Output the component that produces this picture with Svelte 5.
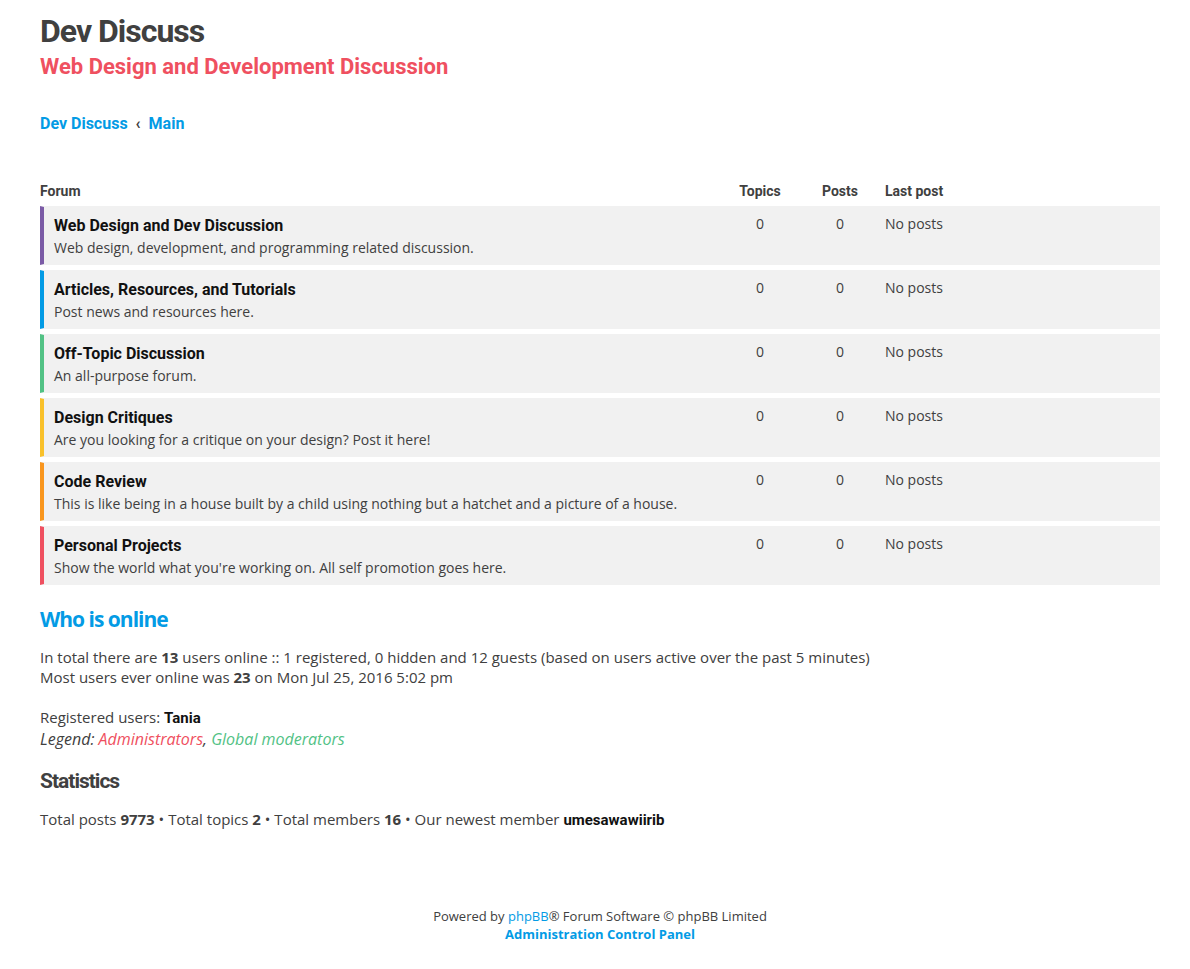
<script>
  const forums = [
    { name: 'Web Design and Dev Discussion', text: 'Web design, development, and programming related discussion.', tone: 'purple' },
    { name: 'Articles, Resources, and Tutorials', text: 'Post news and resources here.', tone: 'blue' },
    { name: 'Off-Topic Discussion', text: 'An all-purpose forum.', tone: 'green' },
    { name: 'Design Critiques', text: 'Are you looking for a critique on your design? Post it here!', tone: 'yellow' },
    { name: 'Code Review', text: 'This is like being in a house built by a child using nothing but a hatchet and a picture of a house.', tone: 'orange' },
    { name: 'Personal Projects', text: "Show the world what you're working on. All self promotion goes here.", tone: 'red' }
  ];
</script>

<div class="page">
  <header>
    <h1>Dev Discuss</h1>
    <p class="tagline">Web Design and Development Discussion</p>
  </header>

  <nav>
    <a href="#home">Dev Discuss</a>
    <span>‹</span>
    <a href="#main">Main</a>
  </nav>

  <main>
    <table>
      <thead>
        <tr>
          <th>Forum</th>
          <th class="num">Topics</th>
          <th class="num">Posts</th>
          <th class="last">Last post</th>
        </tr>
      </thead>
      <tbody>
        {#each forums as forum}
          <tr>
            <td class="forum {forum.tone}">
              <a href="#forum">{forum.name}</a>
              <p>{forum.text}</p>
            </td>
            <td class="num">0</td>
            <td class="num">0</td>
            <td class="last">No posts</td>
          </tr>
        {/each}
      </tbody>
    </table>

    <section>
      <h2><a href="#online">Who is online</a></h2>
      <p>
        In total there are <strong>13</strong> users online :: 1 registered, 0 hidden and 12 guests (based on users active over the past 5 minutes)<br />
        Most users ever online was <strong>23</strong> on Mon Jul 25, 2016 5:02 pm
      </p>
      <p class="users">Registered users: <a class="user" href="#tania">Tania</a></p>
      <p class="legend">Legend: <a class="admin" href="#admins">Administrators</a>, <a class="mod" href="#mods">Global moderators</a></p>
    </section>

    <section>
      <h2 class="stats">Statistics</h2>
      <p>
        Total posts <strong>9773</strong> • Total topics <strong>2</strong> • Total members <strong>16</strong> • Our newest member <a class="user" href="#newest">umesawawiirib</a>
      </p>
    </section>
  </main>

  <footer>
    <p>Powered by <a href="#phpbb">phpBB</a>® Forum Software © phpBB Limited</p>
    <p><a class="panel" href="#acp">Administration Control Panel</a></p>
  </footer>
</div>

<style>
  :global(body) {
    margin: 0;
    background: #fff;
  }

  .page {
    padding: 12px 30px 27px 40px;
    color: #404040;
    font: 15px/20px 'Open Sans', sans-serif;
  }

  h1, h2, p {
    margin: 0;
  }

  a {
    color: #039be5;
    text-decoration: none;
  }

  h1 {
    font: 700 32px/38px Roboto, sans-serif;
    letter-spacing: -1px;
  }

  .tagline {
    padding-top: 2px;
    color: #ef5060;
    font: 700 22px/30px Roboto, sans-serif;
  }

  nav {
    display: flex;
    gap: 8px;
    padding: 32px 0 42px;
    font: 700 16px/20px Roboto, sans-serif;
  }

  table {
    width: 100%;
    border-spacing: 0 5px;
    table-layout: fixed;
  }

  th {
    padding: 0;
    font: 700 14px/20px Roboto, sans-serif;
    text-align: left;
  }

  td {
    box-sizing: border-box;
    height: 59px;
    padding: 7px 0 5px;
    border: solid #f1f1f1;
    border-width: 1px 0;
    background: #f1f1f1;
    font-size: 14px;
    line-height: 20px;
    vertical-align: top;
  }

  .forum {
    padding: 8px 10px 5px;
    border-left-width: 4px;
  }

  .forum a {
    display: block;
    color: #111;
    font: 700 16px/22px Roboto, sans-serif;
  }

  .forum p {
    padding-top: 1px;
  }

  .purple { border-left-color: #7b5ba6; }
  .blue { border-left-color: #039be5; }
  .green { border-left-color: #52c285; }
  .yellow { border-left-color: #f9c12b; }
  .orange { border-left-color: #f9961e; }
  .red { border-left-color: #ef5060; }

  .num {
    width: 80px;
    text-align: center;
  }

  .last {
    box-sizing: border-box;
    width: 280px;
    padding-left: 5px;
  }

  h2 {
    padding: 15px 0 14px;
    font-size: 21px;
    font-weight: 700;
    line-height: 28px;
    letter-spacing: -1px;
  }

  .users {
    padding-top: 20px;
  }

  .legend {
    padding: 1px 0 3px;
    font-size: 16px;
    font-style: italic;
  }

  .stats {
    font-family: Roboto, sans-serif;
  }

  .user {
    color: #111;
    font-family: Roboto, sans-serif;
    font-weight: 700;
  }

  .admin { color: #ef5060; }
  .mod { color: #52c285; }

  footer {
    padding-top: 77px;
    font-size: 13px;
    line-height: 18px;
    text-align: center;
  }

  .panel {
    font-weight: 700;
  }
</style>
